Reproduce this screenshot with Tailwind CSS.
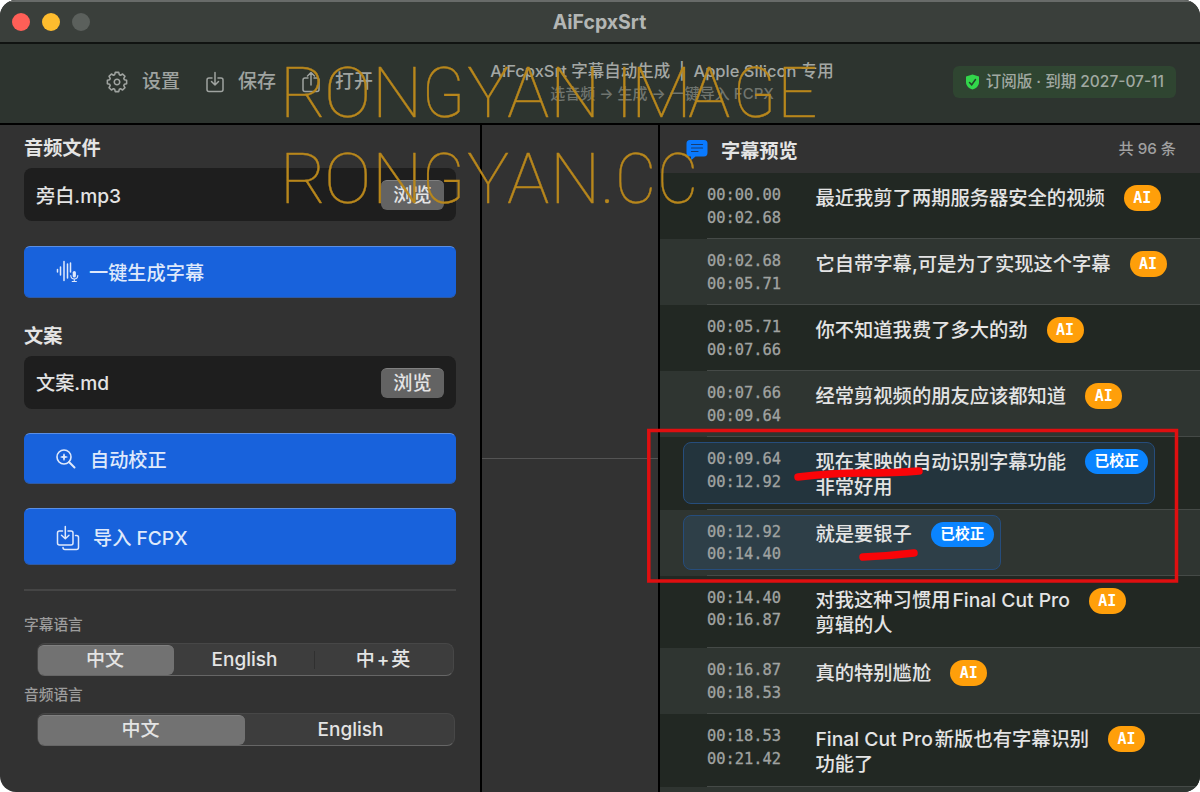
<!DOCTYPE html>
<html lang="zh-CN">

<head>
    <meta charset="UTF-8">
    <meta name="viewport" content="width=device-width, initial-scale=1.0">
    <title>AiFcpxSrt</title>
    <script src="https://cdn.jsdelivr.net/npm/@tailwindcss/browser@4"></script>
</head>

<body class="bg-white overflow-hidden">
    <div class="relative w-[1200px] h-[792px] flex flex-col rounded-2xl overflow-hidden bg-[#323232] text-[#e4e4e4] font-['Inter','Noto_Sans_CJK_SC',sans-serif]">

        <!-- Title bar -->
        <header class="h-11 shrink-0 grid grid-cols-3 items-center pl-3 bg-[#3a3f3b] border-t-2 border-t-[#686b69] border-b-2 border-b-[#101311]">
            <div class="flex gap-3">
                <span class="size-[18px] rounded-full bg-[#ff5f57]"></span>
                <span class="size-[18px] rounded-full bg-[#febc2e]"></span>
                <span class="size-[18px] rounded-full bg-[#5b605c]"></span>
            </div>
            <h1 class="text-center text-[19.500px] leading-6 font-bold text-[#b3b6b4] pr-[13px] pb-px">AiFcpxSrt</h1>
        </header>

        <!-- Toolbar -->
        <div class="relative h-[81px] shrink-0 flex items-center justify-between pl-[106px] pr-6 bg-[#2d342f] border-b-2 border-black text-[#9fa3a0]">
            <div class="flex items-center text-[19px] leading-6 font-medium pb-[3px]">
                <svg class="size-[22px] mr-[14px]" viewBox="-12 -12 24 24" fill="none" stroke="currentColor" stroke-width="1.7" stroke-linejoin="round">
                    <path d="M10.500-1.900V1.900L8 2.500 7.400 3.900 8.700 6.100 6.100 8.700 3.900 7.400 2.500 8 1.900 10.500H-1.900L-2.500 8-3.900 7.400-6.100 8.700-8.700 6.100-7.400 3.900-8 2.500-10.500 1.900V-1.900L-8-2.500-7.400-3.900-8.700-6.100-6.100-8.700-3.900-7.400-2.500-8-1.900-10.500H1.900L2.500-8 3.900-7.400 6.100-8.700 8.700-6.100 7.400-3.900 8-2.500Z" />
                    <circle r="3" />
                </svg>
                <span class="mr-[25px]">设置</span>
                <svg class="w-5 h-[22px] mr-[13px]" viewBox="0 0 20 22" fill="none" stroke="currentColor" stroke-width="1.5" stroke-linecap="round" stroke-linejoin="round">
                    <path d="M7 7H4Q2 7 2 9V18.500Q2 20.500 4 20.500H16Q18 20.500 18 18.500V9Q18 7 16 7H13M10 1.500V14M6.500 10.500 10 14 13.500 10.500" />
                </svg>
                <span class="mr-[25px]">保存</span>
                <svg class="w-5 h-[22px] mr-[14px]" viewBox="0 0 20 22" fill="none" stroke="currentColor" stroke-width="1.5" stroke-linecap="round" stroke-linejoin="round">
                    <path d="M7 7H4Q2 7 2 9V18.500Q2 20.500 4 20.500H16Q18 20.500 18 18.500V9Q18 7 16 7H13M10 14V1.500M6.500 5 10 1.500 13.500 5" />
                </svg>
                <span>打开</span>
            </div>
            <div class="absolute left-[462px] w-[400px] top-[15px] text-center">
                <p class="text-[16.500px] leading-6 font-medium text-[#a3a7a4] whitespace-pre">AiFcpxSrt 字幕自动生成  |  Apple Silicon 专用</p>
                <p class="text-[15px] leading-[22px] text-[#70756f] font-medium">选音频 → 生成 → 一键导入 FCPX</p>
            </div>
            <div class="flex items-center h-8 mb-[3px] px-3 rounded-md bg-[#2f4531] text-[15.500px] font-medium text-[#a1a9a2] whitespace-nowrap">
                <svg class="w-[15px] h-4 mr-[6px]" viewBox="0 0 15 16">
                    <path d="M7.500 0.500 14 2.500V8C14 12 11 14.500 7.500 15.500 4 14.500 1 12 1 8V2.500Z" fill="#32d74b" />
                    <path d="M4.500 8.500 6.700 10.800 10.500 5.500" fill="none" stroke="#234429" stroke-width="1.500" stroke-linecap="round" />
                </svg>
                <span>订阅版 · 到期 2027-07-11</span>
            </div>
        </div>

        <div class="flex flex-1 min-h-0">
            <!-- Sidebar -->
            <aside class="w-[482px] shrink-0 border-r-2 border-black pl-6 pr-6 pt-[11px]">
                <h2 class="text-[19.200px] leading-6 font-bold">音频文件</h2>
                <div class="mt-[8px] h-[53px] flex items-center justify-between pl-3 pr-3 rounded-lg bg-[#1e1e1e] text-[19.200px]">
                    <span class="pt-[3px] font-medium">旁白.mp3</span>
                    <button class="w-[63px] h-[30px] rounded-md bg-[#636363] border-t border-[#808080] font-medium leading-6">浏览</button>
                </div>
                <button class="mt-[25px] w-full h-[52px] flex items-center pl-8 rounded-md bg-[#1862dc] border border-t-[#5a8fe5] border-x-[#1862dc] border-b-[#2f5aa4] text-[19.200px] font-medium text-[#dfe9fb]">
                    <svg class="w-[23px] h-[23px] -ml-px mr-[10px] -mt-px" viewBox="0 0 23 23" fill="none" stroke="currentColor" stroke-width="1.5" stroke-linecap="round">
                        <path d="M1.500 9.500V12M4.500 7V15M8 1.500V20.500M11.500 4V18M14.500 3V12" />
                        <rect x="16.700" y="11" width="3.200" height="6.500" rx="1.600" fill="currentColor" stroke="none" />
                        <path d="M14.800 15.500Q15 19 18.300 19 21.600 19 21.800 15.500M18.300 19V21.300M16.200 21.500H20.400" stroke-width="1.100" />
                    </svg>
                    <span class="pt-[2px]">一键生成字幕</span>
                </button>
                <h2 class="mt-[26px] text-[19.200px] leading-6 font-bold">文案</h2>
                <div class="mt-[8px] h-[53px] flex items-center justify-between pl-3 pr-3 rounded-lg bg-[#1e1e1e] text-[19.200px]">
                    <span class="pt-[2px] font-medium">文案.md</span>
                    <button class="w-[63px] h-[30px] rounded-md bg-[#636363] border-t border-[#808080] font-medium leading-6">浏览</button>
                </div>
                <button class="mt-6 w-full h-[51px] flex items-center pl-8 rounded-md bg-[#1862dc] border border-t-[#5a8fe5] border-x-[#1862dc] border-b-[#2f5aa4] text-[19.200px] font-medium text-[#dfe9fb]">
                    <svg class="w-5 h-5 -ml-px mr-[14px]" viewBox="0 0 20 20" fill="none" stroke="currentColor" stroke-width="1.600" stroke-linecap="round">
                        <circle cx="8" cy="8" r="7" />
                        <path d="M13 13 18.500 18.500" stroke-width="2" />
                        <path d="M8 4.800 9 7 11.200 8 9 9 8 11.200 7 9 4.800 8 7 7Z" fill="currentColor" stroke="none" />
                        <path d="M8 5V11M5 8H11" stroke-width="1.200" />
                    </svg>
                    <span class="pt-[3px]">自动校正</span>
                </button>
                <button class="mt-6 w-full h-[57px] flex items-center pl-8 rounded-md bg-[#1862dc] border border-t-[#5a8fe5] border-x-[#1862dc] border-b-[#2f5aa4] text-[19.200px] font-medium text-[#dfe9fb]">
                    <svg class="w-6 h-[26px] -ml-px mt-[2px] mr-[13px]" viewBox="0 0 24 26" fill="none" stroke="currentColor" stroke-width="1.500" stroke-linecap="round" stroke-linejoin="round">
                        <path d="M6.500 6H3.500Q1.500 6 1.500 8V18Q1.500 20 3.500 20H15Q17 20 17 18V8Q17 6 15 6H12M9.300 1.500V13.500M5.500 10.200 9.300 13.800 13 10.200" />
                        <path d="M19.500 10.500H20.500Q22.500 10.500 22.500 12.500V22.500Q22.500 24.500 20.500 24.500H9Q7 24.500 7 22.500" />
                    </svg>
                    <span class="pt-[3px]">导入 FCPX</span>
                </button>
                <hr class="mt-6 border-t-2 border-[#454545]">

                <p class="mt-[24px] text-[14.700px] leading-5 font-medium text-[#9c9c9c]">字幕语言</p>
                <div class="mt-[8px] ml-[13px] w-[417px] h-[33px] flex items-center rounded-lg bg-[#3d3d3d] border border-[#474747] border-b-[#666666] text-[19px] leading-6 font-medium text-center">
                    <span class="w-[136px] h-[30px] leading-[28px] pr-[2px] rounded-md bg-[#727272] border-t border-[#808080]">中文</span>
                    <span class="w-[140px] pl-px">English</span>
                    <span class="w-px h-[18px] bg-[#303030]"></span>
                    <span class="flex-1 tracking-[2px]">中+英</span>
                </div>
                <p class="mt-[9px] text-[14.700px] leading-5 font-medium text-[#9c9c9c]">音频语言</p>
                <div class="mt-[8px] ml-[13px] w-[418px] h-[33px] flex items-center rounded-lg bg-[#3d3d3d] border border-[#474747] border-b-[#666666] text-[19px] leading-6 font-medium text-center">
                    <span class="w-[207px] h-[30px] leading-[28px] pr-[2px] rounded-md bg-[#727272] border-t border-[#808080]">中文</span>
                    <span class="flex-1 pl-[2px]">English</span>
                </div>
            </aside>

            <!-- Split panes -->
            <div class="w-[178px] shrink-0 border-r-2 border-black">
                <div class="h-[334px] border-b border-[#545454]"></div>
            </div>

            <!-- Subtitle preview -->
            <main class="flex-1 min-w-0 flex flex-col">
                <div class="h-12 shrink-0 flex items-center pl-[26px] pr-6 pt-[2px]">
                    <svg class="w-[22px] h-5 mr-[13px]" viewBox="0 0 22 20">
                        <path d="M4 0H18Q21.500 0 21.500 3.500V12.500Q21.500 16.500 18 16.500H9.500L6 19.500Q5 20 5 18.500V16.500H4Q0.500 16.500 0.500 12.500V3.500Q0.500 0 4 0Z" fill="#0a7aff" />
                        <path d="M5.500 4.500H16.500M5.500 8H16.500M5.500 11.500H12" stroke="#173d73" stroke-width="1.200" stroke-linecap="round" />
                    </svg>
                    <h2 class="text-[19.200px] leading-6 font-bold pt-px">字幕预览</h2>
                    <span class="ml-auto text-[15.200px] font-medium text-[#a0a0a0] pb-px">共 96 条</span>
                </div>
                <div id="list"></div>
            </main>
        </div>

        <!-- Marks drawn over the window -->
        <svg class="absolute inset-0 pointer-events-none" width="1200" height="792" viewBox="0 0 1200 792" fill="none">
            <rect x="648.800" y="430.500" width="527.700" height="150.500" stroke="#e00f10" stroke-width="3.500" />
            <path d="M798 477Q831 473 863 473T919 471" stroke="#f90408" stroke-width="7.500" stroke-linecap="round" />
            <path d="M863 557Q889 556 914 553" stroke="#f90408" stroke-width="7.500" stroke-linecap="round" />
            <g class="font-['Roboto',sans-serif] font-thin text-[71px]" fill="#b8871c" stroke="#b8871c" stroke-width="0.400">
                <text y="117" x="280 324 372">RON</text>
                <text y="117" x="422" textLength="43" lengthAdjust="spacingAndGlyphs">G</text>
                <text y="117" x="467 507 550 600 615 631 688">YAN IMA</text>
                <text y="117" x="733" textLength="43" lengthAdjust="spacingAndGlyphs">G</text>
                <text y="117" x="777">E</text>
                <text y="203" x="280 324 372">RON</text>
                <text y="203" x="422" textLength="43" lengthAdjust="spacingAndGlyphs">G</text>
                <text y="203" x="467 507 550 600">YAN.</text>
                <text y="203" x="615" textLength="41" lengthAdjust="spacingAndGlyphs">C</text>
                <text y="203" x="657" textLength="41" lengthAdjust="spacingAndGlyphs">C</text>
            </g>
        </svg>
    </div>

    <script>
        const rows = [
            ["00:00.00", "00:02.68", ["最近我剪了两期服务器安全的视频"]],
            ["00:02.68", "00:05.71", ["它自带字幕,可是为了实现这个字幕"]],
            ["00:05.71", "00:07.66", ["你不知道我费了多大的劲"]],
            ["00:07.66", "00:09.64", ["经常剪视频的朋友应该都知道"]],
            ["00:09.64", "00:12.92", ["现在某映的自动识别字幕功能", "非常好用"], true],
            ["00:12.92", "00:14.40", ["就是要银子"], true],
            ["00:14.40", "00:16.87", [`对我这种习惯用<span class="ml-[2px]">Final Cut Pro</span>`, "剪辑的人"]],
            ["00:16.87", "00:18.53", ["真的特别尴尬"]],
            ["00:18.53", "00:21.42", [`<span class="mr-[2px]">Final Cut Pro</span>新版也有字幕识别`, "功能了"]],
            ["", "", [""]],
        ];
        document.getElementById("list").innerHTML = rows.map(([start, end, text, fixed], i) => {
            const badge = fixed
                ? `<span class="w-[63px] h-[25px] rounded-full bg-[#0a84ff] text-white text-[14.700px] leading-[24px] font-bold text-center">已校正</span>`
                : `<span class="w-[37px] h-[26px] rounded-full bg-[#ff9f0a] text-white font-['DejaVu_Sans_Mono',monospace] text-[15px] leading-[26px] font-bold text-center">AI</span>`;
            return `
            <div class="${text.length > 1 ? "h-[72.500px]" : "h-[66px]"} ${i % 2 ? "bg-[#2f3531]" : "bg-[#222823]"} flex flex-col pl-[23px] pt-[5px]">
                <div class="self-start flex-1 flex items-start mb-[5px] pl-[23px] pr-[6px] rounded-lg border ${fixed ? "border-[#264d7c] bg-[#2a6fc0]/17" : "border-transparent"}">
                    <div class="w-[108.500px] pt-[5px] font-['DejaVu_Sans_Mono',monospace] text-[15.400px] leading-[22.500px] text-[#a0a3a1] [-webkit-text-stroke:0.3px]">${start}<br>${end}</div>
                    <div class="pt-[6.500px] text-[19.300px] leading-[25px] font-medium whitespace-nowrap">${text.join("<br>")}</div>
                    <div class="flex pt-[6px] ml-[19px]">${start ? badge : ""}</div>
                </div>
                <div class="ml-6 h-px shrink-0 bg-[#454a47]"></div>
            </div>`;
        }).join("");
    </script>
</body>

</html>
